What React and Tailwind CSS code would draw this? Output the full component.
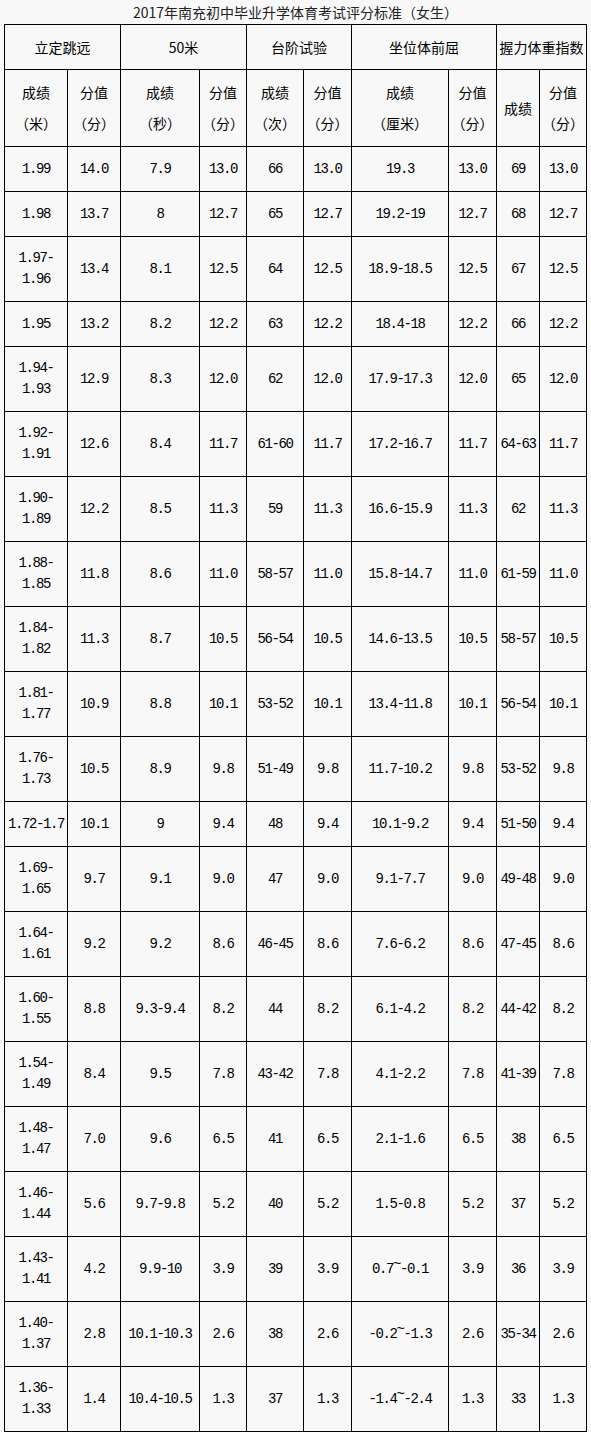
const ROWS = [
  [["1.99"], "14.0", "7.9", "13.0", "66", "13.0", "19.3", "13.0", "69", "13.0"],
  [["1.98"], "13.7", "8", "12.7", "65", "12.7", "19.2-19", "12.7", "68", "12.7"],
  [["1.97-", "1.96"], "13.4", "8.1", "12.5", "64", "12.5", "18.9-18.5", "12.5", "67", "12.5"],
  [["1.95"], "13.2", "8.2", "12.2", "63", "12.2", "18.4-18", "12.2", "66", "12.2"],
  [["1.94-", "1.93"], "12.9", "8.3", "12.0", "62", "12.0", "17.9-17.3", "12.0", "65", "12.0"],
  [["1.92-", "1.91"], "12.6", "8.4", "11.7", "61-60", "11.7", "17.2-16.7", "11.7", "64-63", "11.7"],
  [["1.90-", "1.89"], "12.2", "8.5", "11.3", "59", "11.3", "16.6-15.9", "11.3", "62", "11.3"],
  [["1.88-", "1.85"], "11.8", "8.6", "11.0", "58-57", "11.0", "15.8-14.7", "11.0", "61-59", "11.0"],
  [["1.84-", "1.82"], "11.3", "8.7", "10.5", "56-54", "10.5", "14.6-13.5", "10.5", "58-57", "10.5"],
  [["1.81-", "1.77"], "10.9", "8.8", "10.1", "53-52", "10.1", "13.4-11.8", "10.1", "56-54", "10.1"],
  [["1.76-", "1.73"], "10.5", "8.9", "9.8", "51-49", "9.8", "11.7-10.2", "9.8", "53-52", "9.8"],
  [["1.72-1.7"], "10.1", "9", "9.4", "48", "9.4", "10.1-9.2", "9.4", "51-50", "9.4"],
  [["1.69-", "1.65"], "9.7", "9.1", "9.0", "47", "9.0", "9.1-7.7", "9.0", "49-48", "9.0"],
  [["1.64-", "1.61"], "9.2", "9.2", "8.6", "46-45", "8.6", "7.6-6.2", "8.6", "47-45", "8.6"],
  [["1.60-", "1.55"], "8.8", "9.3-9.4", "8.2", "44", "8.2", "6.1-4.2", "8.2", "44-42", "8.2"],
  [["1.54-", "1.49"], "8.4", "9.5", "7.8", "43-42", "7.8", "4.1-2.2", "7.8", "41-39", "7.8"],
  [["1.48-", "1.47"], "7.0", "9.6", "6.5", "41", "6.5", "2.1-1.6", "6.5", "38", "6.5"],
  [["1.46-", "1.44"], "5.6", "9.7-9.8", "5.2", "40", "5.2", "1.5-0.8", "5.2", "37", "5.2"],
  [["1.43-", "1.41"], "4.2", "9.9-10", "3.9", "39", "3.9", "0.7~-0.1", "3.9", "36", "3.9"],
  [["1.40-", "1.37"], "2.8", "10.1-10.3", "2.6", "38", "2.6", "-0.2~-1.3", "2.6", "35-34", "2.6"],
  [["1.36-", "1.33"], "1.4", "10.4-10.5", "1.3", "37", "1.3", "-1.4~-2.4", "1.3", "33", "1.3"],
];

const GROUPS = ["立定跳远", "50米", "台阶试验", "坐位体前屈", "握力体重指数"];

const SUB_HEADERS = [
  ["成绩", "（米）"],
  ["分值", "（分）"],
  ["成绩", "（秒）"],
  ["分值", "（分）"],
  ["成绩", "（次）"],
  ["分值", "（分）"],
  ["成绩", "（厘米）"],
  ["分值", "（分）"],
  ["成绩"],
  ["分值", "（分）"],
];

const cell =
  "border-r border-b border-black flex flex-col items-center justify-center text-center";

const Value = ({ text }) => {
  if (!text.includes("~")) return text;
  const [a, b] = text.split("~");
  return (
    <>
      {a}
      <span className="relative -top-[5px]">~</span>
      {b}
    </>
  );
};

export default function App() {
  return (
    <div className="min-h-screen bg-[#f8f8f8] text-black">
      <div className="h-[24px] flex items-center justify-center text-[14px] text-[#222] font-['Noto_Sans_CJK_SC',sans-serif]">
        2017年南充初中毕业升学体育考试评分标准（女生）
      </div>

      <div className="mx-auto w-fit grid grid-cols-[63px_53px_79px_47px_57px_48px_97px_48px_43px_47px] border-l border-t border-black">
        {GROUPS.map((title) => (
          <div
            key={title}
            className={`${cell} col-span-2 h-[45px] text-[14px] font-['Noto_Sans_CJK_SC',sans-serif]`}
          >
            {title}
          </div>
        ))}

        {SUB_HEADERS.map((lines, i) => (
          <div
            key={i}
            className={`${cell} h-[77px] text-[14px] leading-[31px] font-['Noto_Sans_CJK_SC',sans-serif]`}
          >
            {lines.map((line) => (
              <span key={line}>{line}</span>
            ))}
          </div>
        ))}

        {ROWS.map((row, r) => {
          const [first, ...rest] = row;
          const tall = first.length > 1;
          const height = tall ? "h-[65px]" : "h-[45px]";
          const font =
            "text-[14px] leading-[21px] tracking-[-1.4px] font-['Liberation_Mono','Noto_Sans_CJK_SC',monospace]";

          return [
            <div key={`${r}-0`} className={`${cell} ${height} ${font}`}>
              {first.map((line) => (
                <span key={line}>{line}</span>
              ))}
            </div>,
            ...rest.map((value, c) => (
              <div key={`${r}-${c + 1}`} className={`${cell} ${height} ${font}`}>
                <span>
                  <Value text={value} />
                </span>
              </div>
            )),
          ];
        })}
      </div>
    </div>
  );
}
